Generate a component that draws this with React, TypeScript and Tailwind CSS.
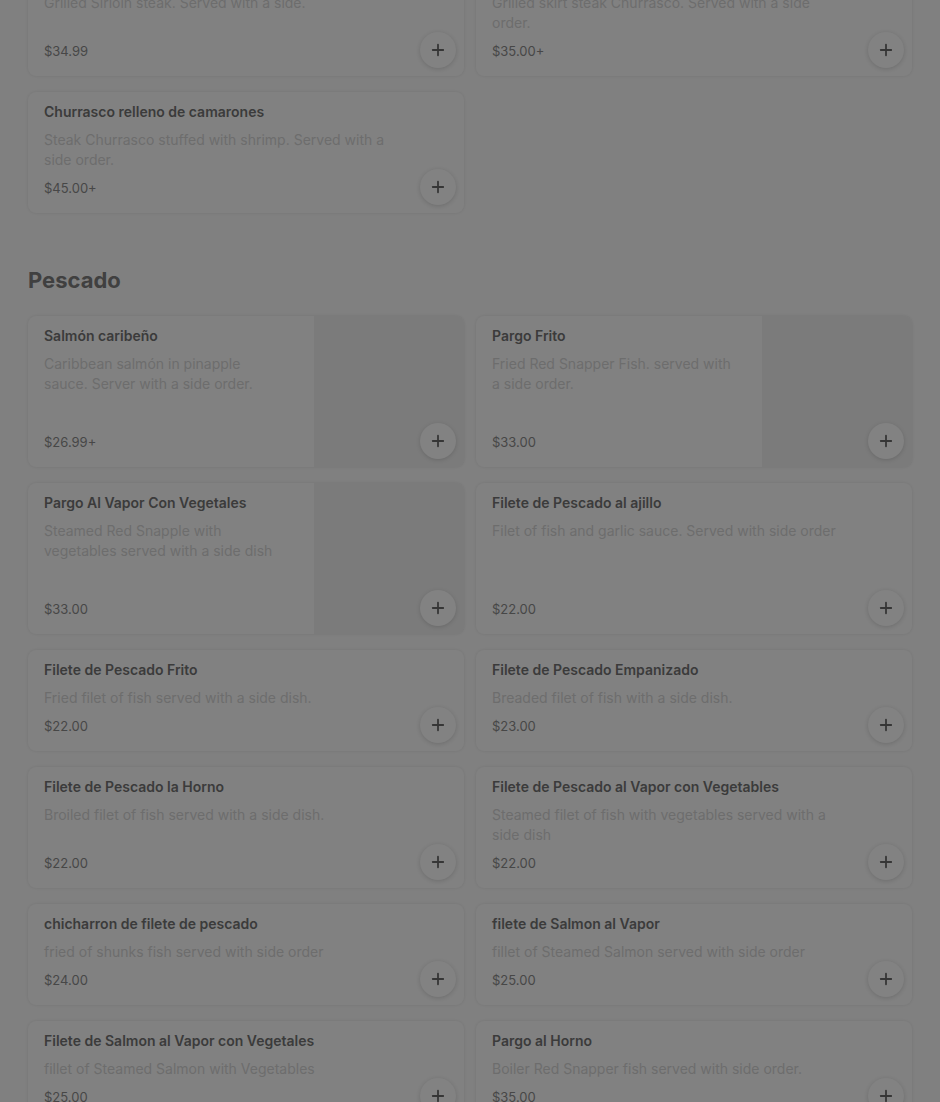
import { Plus } from 'lucide-react';

interface MenuItem {
    name: string;
    description: string;
    price: string;
    image?: boolean;
}

const steakItems: MenuItem[] = [
    { name: 'Churrasco de Solomillo', description: 'Grilled Sirloin steak. Served with a side.', price: '$34.99' },
    { name: 'Churrasco', description: 'Grilled skirt steak Churrasco. Served with a side order.', price: '$35.00+' },
    { name: 'Churrasco relleno de camarones', description: 'Steak Churrasco stuffed with shrimp. Served with a side order.', price: '$45.00+' },
];

const fishItems: MenuItem[] = [
    { name: 'Salmón caribeño', description: 'Caribbean salmón in pinapple sauce. Server with a side order.', price: '$26.99+', image: true },
    { name: 'Pargo Frito', description: 'Fried Red Snapper Fish. served with a side order.', price: '$33.00', image: true },
    { name: 'Pargo Al Vapor Con Vegetales', description: 'Steamed Red Snapple with vegetables served with a side dish', price: '$33.00', image: true },
    { name: 'Filete de Pescado al ajillo', description: 'Filet of fish and garlic sauce. Served with side order', price: '$22.00' },
    { name: 'Filete de Pescado Frito', description: 'Fried filet of fish served with a side dish.', price: '$22.00' },
    { name: 'Filete de Pescado Empanizado', description: 'Breaded filet of fish with a side dish.', price: '$23.00' },
    { name: 'Filete de Pescado la Horno', description: 'Broiled filet of fish served with a side dish.', price: '$22.00' },
    { name: 'Filete de Pescado al Vapor con Vegetables', description: 'Steamed filet of fish with vegetables served with a side dish', price: '$22.00' },
    { name: 'chicharron de filete de pescado', description: 'fried of shunks fish served with side order', price: '$24.00' },
    { name: 'filete de Salmon al Vapor', description: 'fillet of Steamed Salmon served with side order', price: '$25.00' },
    { name: 'Filete de Salmon al Vapor con Vegetales', description: 'fillet of Steamed Salmon with Vegetables', price: '$25.00' },
    { name: 'Pargo al Horno', description: 'Boiler Red Snapper fish served with side order.', price: '$35.00' },
];

function ItemCard({ item }: { item: MenuItem }) {
    return (
        <div className="relative flex rounded-lg bg-[#818181] shadow-[0_0_3px_rgba(0,0,0,0.1)] overflow-hidden">
            <div className={`flex flex-1 flex-col pl-4 pt-[10px] pb-[15px] ${item.image ? 'pr-[30px] min-h-[151px]' : 'pr-[70px]'}`}>
                <div className="text-[14px] leading-5 font-semibold text-[#3b3b3b]">{item.name}</div>
                <div className="mt-2 text-[14px] leading-5 text-[#6d6d6d]">{item.description}</div>
                <div className="mt-auto pt-2 text-[13px] leading-5 text-[#474747]">{item.price}</div>
            </div>
            {item.image && <div className="w-[150px] shrink-0 bg-[#7b7b7b]" />}
            <button className="absolute right-2 bottom-2 flex h-9 w-9 items-center justify-center rounded-full bg-[#828282] shadow-[0_1px_4px_rgba(0,0,0,0.15)]">
                <Plus size={18} strokeWidth={2.4} className="text-[#363636]" />
            </button>
        </div>
    );
}

export default function App() {
    return (
        <div
            className="min-h-screen bg-[#808080] px-7 pb-10 overflow-hidden"
            style={{ fontFamily: 'Inter, "Noto Sans", sans-serif' }}
        >
            <div className="-mt-[45px] grid grid-cols-2 gap-x-3 gap-y-4">
                {steakItems.map(item => (
                    <ItemCard key={item.name} item={item} />
                ))}
            </div>

            <h2 className="mt-[51px] mb-5 text-[22px] leading-8 font-bold text-[#404040]">Pescado</h2>

            <div className="grid grid-cols-2 gap-x-3 gap-y-4">
                {fishItems.map(item => (
                    <ItemCard key={item.name} item={item} />
                ))}
            </div>
        </div>
    );
}
